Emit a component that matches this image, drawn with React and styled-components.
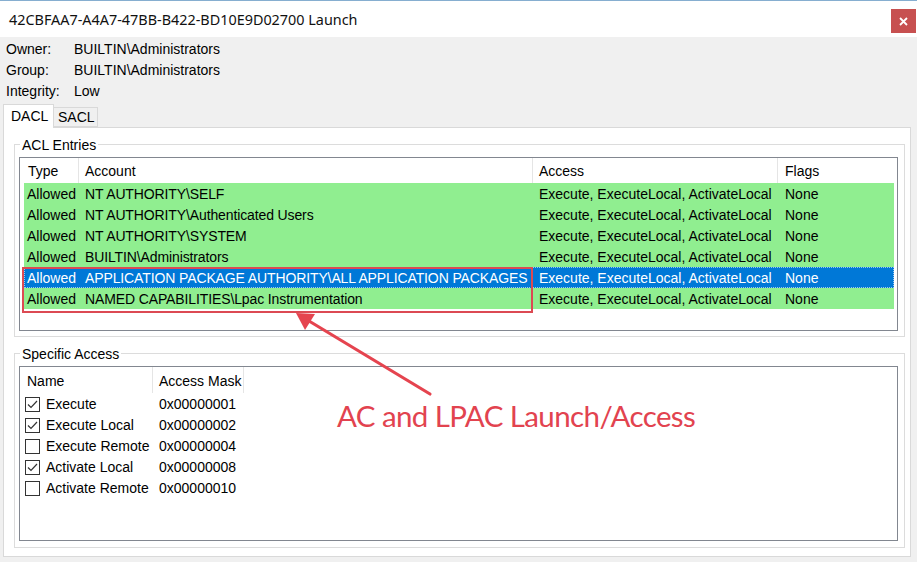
import React from "react";
import styled, { createGlobalStyle } from "styled-components";

const Global = createGlobalStyle`
  html, body { margin: 0; padding: 0; background: #f0f0f0; }
  * { box-sizing: border-box; }
`;

const Window = styled.div`
  position: relative;
  width: 917px;
  height: 562px;
  overflow: hidden;
  background: #f0f0f0;
  border-top: 1px solid #86aed0;
  display: flex;
  flex-direction: column;
  font-family: "Liberation Sans", Arial, sans-serif;
  font-size: 14px;
  color: #000;
`;

const TitleBar = styled.div`
  height: 36px;
  flex: none;
  background: #fff;
  display: flex;
  align-items: center;
  justify-content: space-between;
  padding: 0 1px 0 9px;
`;

const Title = styled.div`
  font-family: "Noto Sans", "Open Sans", sans-serif;
  font-size: 14.4px;
  color: #111;
`;

const CloseButton = styled.div`
  width: 25px;
  height: 24px;
  margin-top: 4px;
  background: #c75050;
  display: flex;
  align-items: center;
  justify-content: center;
`;

const InfoGrid = styled.div`
  display: grid;
  grid-template-columns: 68px 1fr;
  grid-auto-rows: 21px;
  align-items: center;
  padding: 1px 0 0 6px;
`;

const TabRow = styled.div`
  height: 26px;
  flex: none;
  display: flex;
  align-items: flex-end;
  padding-left: 3px;
`;

const Tab = styled.div`
  position: relative;
  z-index: ${(p) => (p.$active ? 1 : 0)};
  width: ${(p) => p.$w}px;
  height: ${(p) => (p.$active ? 24 : 20)}px;
  margin-bottom: ${(p) => (p.$active ? -1 : 0)}px;
  background: ${(p) => (p.$active ? "#fff" : "#f0f0f0")};
  border: 1px solid #d9d9d9;
  border-bottom: ${(p) => (p.$active ? "none" : "1px solid #d9d9d9")};
  border-left: ${(p) => (p.$active ? "1px solid #d9d9d9" : "none")};
  display: flex;
  align-items: center;
  padding-left: ${(p) => (p.$active ? 7 : 4)}px;
  padding-bottom: ${(p) => (p.$active ? 1 : 0)}px;
`;

const Panel = styled.div`
  flex: none;
  height: 430px;
  margin: 0 6px 0 3px;
  background: #fff;
  border: 1px solid #d9d9d9;
  padding: 8px 5px 8px 10px;
  display: flex;
  flex-direction: column;
  gap: 8px;
`;

const Group = styled.fieldset`
  margin: 0;
  min-width: 0;
  border: 1px solid #dcdcdc;
  padding: 5px 6px ${(p) => p.$pb}px 4px;
`;

const Legend = styled.legend`
  font-size: 14px;
  line-height: 16px;
  padding: 0 2px;
  margin-left: 1px;
  position: relative;
  top: 1px;
`;

const ListView = styled.div`
  height: ${(p) => p.$h}px;
  border: 1px solid #828790;
  background: #fff;
  display: flex;
  flex-direction: column;
`;

const Header = styled.div`
  height: ${(p) => p.$h}px;
  flex: none;
  display: grid;
  grid-template-columns: ${(p) => p.$cols};
  align-items: stretch;
`;

const HeaderCell = styled.div`
  display: flex;
  align-items: center;
  padding-left: ${(p) => p.$pl ?? 6}px;
  padding-top: 1px;
  border-right: ${(p) => (p.$sep ? "1px solid #e5e5e5" : "none")};
  white-space: nowrap;
`;

const Rows = styled.div`
  display: flex;
  flex-direction: column;
  padding: 0 3px 0 4px;
`;

const Row = styled.div`
  height: 21px;
  display: grid;
  grid-template-columns: ${(p) => p.$cols};
  align-items: center;
  padding-top: 1px;
  background: ${(p) => (p.$selected ? "#0078d7" : p.$bg || "transparent")};
  color: ${(p) => (p.$selected ? "#fff" : "#000")};
  outline: ${(p) => (p.$selected ? "1px dotted #9cc8f0" : "none")};
  outline-offset: -1px;
`;

const Cell = styled.div`
  padding-left: ${(p) => p.$pl ?? 6}px;
  letter-spacing: ${(p) => (p.$tight ? "-0.12px" : "normal")};
  white-space: nowrap;
  overflow: hidden;
  display: flex;
  align-items: center;
`;

const CheckBox = styled.span`
  width: 15px;
  height: 15px;
  flex: none;
  border: 1px solid #333;
  background: #fff;
  margin: 0 6px 0 1px;
  display: inline-flex;
  align-items: center;
  justify-content: center;
`;

const Highlight = styled.div`
  position: absolute;
  left: 22px;
  top: 266px;
  width: 511px;
  height: 46px;
  border: 2px solid #dc4a53;
  pointer-events: none;
`;

const ArrowSvg = styled.svg`
  position: absolute;
  left: 290px;
  top: 299px;
  pointer-events: none;
`;

const Annotation = styled.div`
  position: absolute;
  left: 337px;
  top: 400px;
  font-family: Lato, "Open Sans", sans-serif;
  font-size: 29.5px;
  line-height: 30px;
  letter-spacing: -0.6px;
  color: #e2434f;
  white-space: nowrap;
`;

const ACL_COLS_HEAD = "59px 454px 245px 1fr";
const ACL_COLS_ROW = "55px 454px 245px 1fr";
const SA_COLS_HEAD = "133px 91px 1fr";
const SA_COLS_ROW = "129px 1fr";

const aclEntries = [
  "NT AUTHORITY\\SELF",
  "NT AUTHORITY\\Authenticated Users",
  "NT AUTHORITY\\SYSTEM",
  "BUILTIN\\Administrators",
  "APPLICATION PACKAGE AUTHORITY\\ALL APPLICATION PACKAGES",
  "NAMED CAPABILITIES\\Lpac Instrumentation",
];

const rights = [
  ["Execute", "0x00000001", true],
  ["Execute Local", "0x00000002", true],
  ["Execute Remote", "0x00000004", false],
  ["Activate Local", "0x00000008", true],
  ["Activate Remote", "0x00000010", false],
];

function Check({ checked }) {
  return (
    <CheckBox>
      {checked && (
        <svg width="11" height="11" viewBox="0 0 11 11">
          <polyline points="1,5.5 4,8.5 10,2" fill="none" stroke="#333" strokeWidth="1.2" />
        </svg>
      )}
    </CheckBox>
  );
}

export default function App() {
  return (
    <>
      <Global />
      <Window>
        <TitleBar>
          <Title>42CBFAA7-A4A7-47BB-B422-BD10E9D02700 Launch</Title>
          <CloseButton>
            <svg width="9" height="9" viewBox="0 0 9 9">
              <path d="M1 1 L8 8 M8 1 L1 8" stroke="#fff" strokeWidth="1.8" />
            </svg>
          </CloseButton>
        </TitleBar>

        <InfoGrid>
          <span>Owner:</span>
          <span>BUILTIN\Administrators</span>
          <span>Group:</span>
          <span>BUILTIN\Administrators</span>
          <span>Integrity:</span>
          <span>Low</span>
        </InfoGrid>

        <TabRow>
          <Tab $active $w={51}>DACL</Tab>
          <Tab $w={44}>SACL</Tab>
        </TabRow>

        <Panel>
          <Group $pb={5}>
            <Legend>ACL Entries</Legend>
            <ListView $h={174}>
              <Header $h={25} $cols={ACL_COLS_HEAD}>
                <HeaderCell $pl={8} $sep>Type</HeaderCell>
                <HeaderCell $sep>Account</HeaderCell>
                <HeaderCell $sep>Access</HeaderCell>
                <HeaderCell $pl={7}>Flags</HeaderCell>
              </Header>
              <Rows>
                {aclEntries.map((acc, i) => (
                  <Row key={acc} $cols={ACL_COLS_ROW} $bg="#90ee90" $selected={i === 4}>
                    <Cell $pl={3}>Allowed</Cell>
                    <Cell $tight>{acc}</Cell>
                    <Cell>Execute, ExecuteLocal, ActivateLocal</Cell>
                    <Cell $pl={7}>None</Cell>
                  </Row>
                ))}
              </Rows>
            </ListView>
          </Group>

          <Group $pb={6}>
            <Legend>Specific Access</Legend>
            <ListView $h={175}>
              <Header $h={26} $cols={SA_COLS_HEAD}>
                <HeaderCell $pl={7} $sep>Name</HeaderCell>
                <HeaderCell $sep>Access Mask</HeaderCell>
                <HeaderCell />
              </Header>
              <Rows>
                {rights.map(([name, mask, on]) => (
                  <Row key={name} $cols={SA_COLS_ROW}>
                    <Cell $pl={0}>
                      <Check checked={on} />
                      {name}
                    </Cell>
                    <Cell>{mask}</Cell>
                  </Row>
                ))}
              </Rows>
            </ListView>
          </Group>
        </Panel>

        <Highlight />
        <ArrowSvg width="150" height="100" viewBox="0 0 150 100">
          <line x1="140" y1="94" x2="19" y2="21" stroke="#e5444f" strokeWidth="3.2" strokeLinecap="round" />
          <polygon points="6,13 25,14 15,30" fill="#e5444f" />
        </ArrowSvg>
        <Annotation>AC and LPAC Launch/Access</Annotation>
      </Window>
    </>
  );
}
